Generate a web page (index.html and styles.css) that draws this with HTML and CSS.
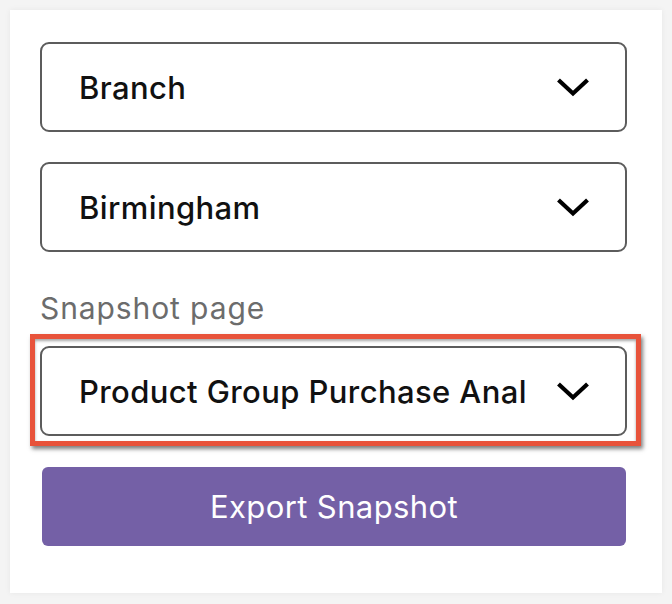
FILE: index.html
```html
<!DOCTYPE html>
<html>
<head>
<meta charset="utf-8">
<link rel="stylesheet" href="styles.css">
</head>
<body>
<div class="card">
  <div class="select">
    <span class="select-text">Branch</span>
    <svg class="chev" viewBox="0 0 32 20" width="32" height="20"><path d="M1.5 3 L16 16.5 L30.5 3" fill="none" stroke="#000" stroke-width="4.2"/></svg>
  </div>
  <div class="select">
    <span class="select-text">Birmingham</span>
    <svg class="chev" viewBox="0 0 32 20" width="32" height="20"><path d="M1.5 3 L16 16.5 L30.5 3" fill="none" stroke="#000" stroke-width="4.2"/></svg>
  </div>
  <div class="label">Snapshot page</div>
  <div class="highlight">
    <div class="select">
      <span class="select-text">Product Group Purchase Analysis</span>
      <svg class="chev" viewBox="0 0 32 20" width="32" height="20"><path d="M1.5 3 L16 16.5 L30.5 3" fill="none" stroke="#000" stroke-width="4.2"/></svg>
    </div>
  </div>
  <button class="export">Export Snapshot</button>
</div>
</body>
</html>
```
FILE: styles.css
```css
html, body {
  margin: 0;
  padding: 0;
  background: #f4f4f4;
}
body {
  font-family: "Inter", sans-serif;
  padding: 10px;
  width: 672px;
  height: 604px;
  box-sizing: border-box;
}
.card {
  width: 652px;
  height: 583px;
  background: #fff;
  box-shadow: 0 0 6px rgba(0,0,0,0.06);
  box-sizing: border-box;
  padding: 32px 35px 0 30px;
  display: flex;
  flex-direction: column;
}
.select {
  height: 90px;
  border: 2px solid #5c5c5c;
  border-radius: 9px;
  box-sizing: border-box;
  display: flex;
  align-items: center;
  padding: 0 36px 0 37px;
  gap: 31px;
  background: #fff;
}
.select + .select {
  margin-top: 30px;
}
.select-text {
  flex: 1;
  font-size: 31px;
  letter-spacing: 0.4px;
  font-weight: 500;
  color: #111;
  white-space: nowrap;
  overflow: hidden;
}
.chev {
  flex: none;
  display: block;
}
.label {
  margin-top: 37px;
  font-size: 30px;
  letter-spacing: 0.9px;
  color: #6c6c6c;
  line-height: 38px;
}
.highlight {
  margin: 7px -14px 0 -10px;
  border: 5px solid #e8533b;
  padding: 7px 9px 5px 5px;
  box-shadow: 2px 3px 4px rgba(0,0,0,0.5), inset 0 2px 3px rgba(0,0,0,0.35);
}
.export {
  margin: 21px 1px 0 2px;
  height: 79px;
  border: none;
  border-radius: 6px;
  background: #7460a6;
  color: #fff;
  font-family: inherit;
  font-size: 31px;
  letter-spacing: 0.4px;
  font-weight: 400;
}
```
